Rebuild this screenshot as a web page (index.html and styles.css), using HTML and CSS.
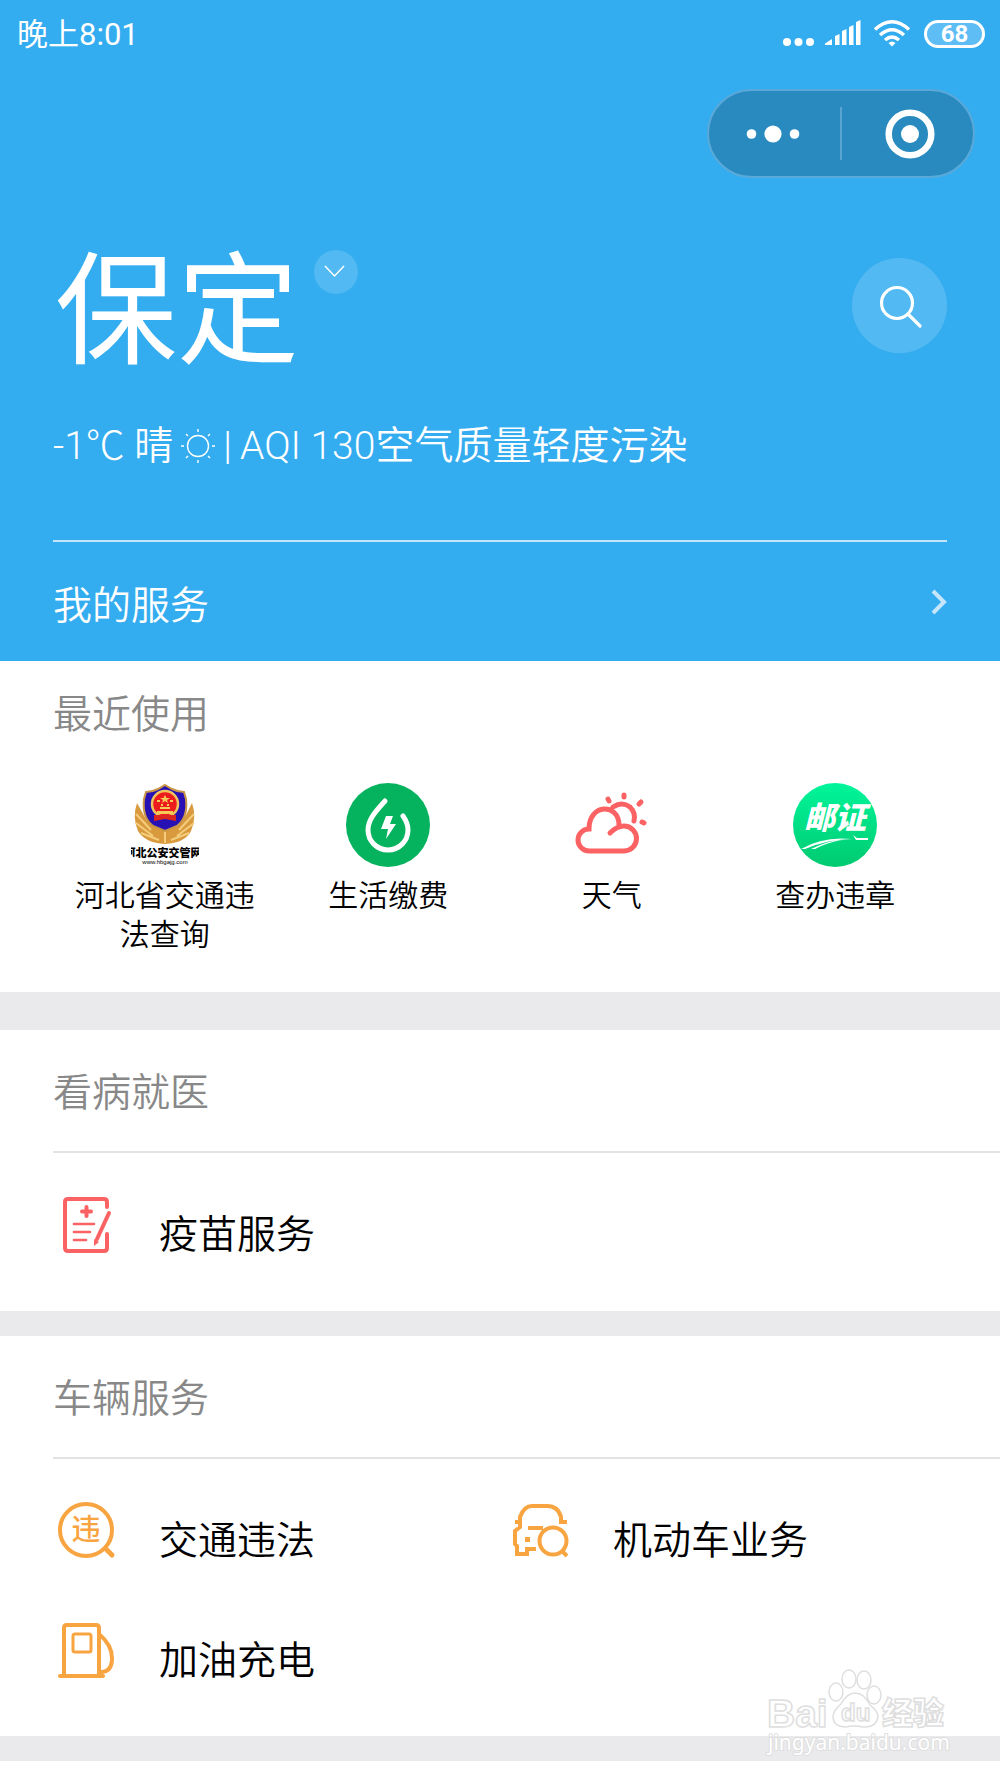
FILE: index.html
```html
<!DOCTYPE html>
<html lang="zh-CN">
<head>
<meta charset="utf-8">
<meta name="viewport" content="width=device-width, initial-scale=1">
<title>城市服务</title>
<link rel="stylesheet" href="styles.css">
</head>
<body>
<header class="hero">
  <div class="status">
    <span>晚上8:01</span>
    <div class="status-icons">
      <svg width="32" height="28" viewBox="0 0 32 28" fill="#fff"><circle cx="5" cy="22" r="4"/><circle cx="16.500" cy="22" r="4"/><circle cx="28" cy="22" r="4"/></svg>
      <svg width="36" height="28" viewBox="0 0 36 28" fill="#fff"><path d="M-1 25V23.500L6 19V25ZM9 25V16L13.500 14V25ZM16 25V11L20.500 9V25ZM23 25V7L27.500 5V25ZM30 25V2L34.500 0V25Z"/></svg>
      <svg width="38" height="28" viewBox="0 0 38 28" fill="none" stroke="#fff" stroke-width="3.500"><path d="M1 9.500Q18-6 35 9.500M6 15Q18 4.500 30 15M11 20Q18 14 25 20"/><path d="M14.500 23Q18 20 21.500 23L18 26.500Z" fill="#fff" stroke="none"/></svg>
      <span class="battery">68</span>
    </div>
  </div>
  <div class="capsule-row">
    <div class="capsule">
      <button class="capsule-btn" aria-label="更多"><svg width="54" height="20" viewBox="0 0 54 20" fill="#fff"><circle cx="5.500" cy="10" r="4.800"/><circle cx="27" cy="10" r="8.600"/><circle cx="48.500" cy="10" r="4.800"/></svg></button>
      <button class="capsule-btn" aria-label="关闭"><svg width="50" height="50" viewBox="0 0 50 50"><circle cx="25" cy="25" r="21.300" fill="none" stroke="#fff" stroke-width="6.500"/><circle cx="25" cy="25" r="9" fill="#fff"/></svg></button>
    </div>
  </div>
  <div class="place">
    <h1 class="city">保定</h1>
    <button class="city-btn" aria-label="切换城市"><svg width="22" height="14" viewBox="0 0 22 14" fill="none" stroke="#fff" stroke-width="1.500"><path d="M0 1L9.500 11L19 1"/></svg></button>
    <button class="search" aria-label="搜索"><svg width="44" height="44" viewBox="0 0 44 44" fill="none" stroke="#fff" stroke-width="3.200" stroke-linecap="round"><circle cx="19" cy="19" r="15.500"/><path d="M30 30L42 42"/></svg></button>
  </div>
  <p class="weather">
    <span>-1℃ <span class="cjk">晴</span></span>
    <svg width="34" height="34" viewBox="0 0 34 34" fill="none" stroke="#fff" stroke-width="1.400"><circle cx="17" cy="17" r="10.500"/><path d="M17 0V3M17 31V34M0 17H3M31 17H34M5 5L7 7M27 27L29 29M5 29L7 27M27 7L29 5"/></svg>
    <span>|</span>
    <span>AQI 130<span class="cjk">空气质量轻度污染</span></span>
  </p>
  <a class="mine" href="#">
    <span>我的服务</span>
    <svg width="16" height="26" viewBox="0 0 16 26" fill="none" stroke="#c5e5fb" stroke-width="4"><path d="M2 2L13 13L2 24"/></svg>
  </a>
</header>
<main>
  <section class="recent">
    <h2 class="title">最近使用</h2>
    <div class="apps">
      <a class="app" href="#">
        <svg width="84" height="84" viewBox="0 0 84 84">
          <defs><clipPath id="round"><path d="M8 60H76V72L60 84H24L8 72Z"/></clipPath></defs>
          <path d="M14 20Q9 34 15 48Q22 60 42 61Q62 60 68 48Q74 34 69 20L60 38H24Z" fill="#d99a3e"/>
          <path d="M13 31L28 47M13 40L30 53M18 50L36 57M71 31L56 47M71 40L54 53M66 50L48 57M42 44V60" stroke="#f3cd7b" stroke-width="2"/>
          <path d="M42 2L49 6Q55 9 61 9L63 16Q65 35 54 43L42 48L30 43Q19 35 21 16L23 9Q29 9 35 6Z" fill="#2711b5" stroke="#c99547" stroke-width="2"/>
          <circle cx="42" cy="21" r="13" fill="#ed1c1c" stroke="#efc45d" stroke-width="2.500"/>
          <path d="M31 32H53V38L42 36L31 38Z" fill="#dc251e"/><path d="M42 12L43.500 15H47L44 17L45 20L42 18L39 20L40 17L37 15H40.500ZM34 28H50V31H34ZM37 24H47V26H37Z" fill="#f5cb58"/>
          <path d="M34 18H37M47 18H50M38 22H40M44 22H46" stroke="#f5cb58" stroke-width="2"/>
          <g clip-path="url(#round)"><text x="40" y="74" text-anchor="middle" class="badge-text">河北公安交管网</text>
          <text x="42" y="81" text-anchor="middle" class="badge-url">www.hbgajg.com</text></g>
        </svg>
        <span class="app-name">河北省交通违法查询</span>
      </a>
      <a class="app" href="#">
        <svg width="84" height="84" viewBox="0 0 84 84"><circle cx="42" cy="42" r="42" fill="#05b35e"/><path d="M39 18C31 27 22 36 22 47A20 20 0 0 0 62 47Q62 40 57 33" fill="none" stroke="#fff" stroke-width="5" stroke-linecap="round"/><path d="M40 33H47L44 41H50L40 56L42 46H35Z" fill="#fff"/></svg>
        <span class="app-name">生活缴费</span>
      </a>
      <a class="app" href="#">
        <svg width="84" height="84" viewBox="-3 0 84 84" fill="none" stroke="#fb6263" stroke-width="5" stroke-linecap="round"><path d="M37 50Q44 43 51 43A12 12 0 0 1 51 68H16A11 11 0 0 1 16 46C16 20 46 20 46 42M40 24Q49 18 57 24Q63 30 61 38M51 12V14M35 16L36 18M66 21L68 19M69 39L71 40"/></svg>
        <span class="app-name">天气</span>
      </a>
      <a class="app" href="#">
        <svg width="84" height="84" viewBox="0 0 84 84"><defs><linearGradient id="g" x2="0" y2="1"><stop stop-color="#00f59a"/><stop offset="1" stop-color="#00ca70"/></linearGradient></defs><circle cx="42" cy="42" r="42" fill="url(#g)"/><text x="42" y="46" text-anchor="middle" class="post-text">邮证</text><path d="M8 66Q30 53 59 56Q36 56 12 66ZM18 66Q36 57 50 57Q35 59 22 66ZM60 52L64 55H75V57H63Z" fill="#fff"/></svg>
        <span class="app-name">查办违章</span>
      </a>
    </div>
  </section>
  <section class="group">
    <h2 class="title">看病就医</h2>
    <div class="services">
      <a class="service" href="#">
        <svg width="60" height="60" viewBox="0 0 60 60" fill="none" stroke="#fb6263" stroke-width="4" stroke-linecap="round"><path d="M54 13V8Q54 5 51 5H15Q12 5 12 8V54Q12 57 15 57H51Q54 57 54 54V40"/><path d="M33.500 13V22M29 17.500H38" stroke-width="4"/><path d="M21 30H41M21 38H37M21 46H33" stroke-width="2.600"/><path d="M56 19L44 45" stroke-width="4"/><path d="M41 45L46 48L41 52Z" fill="#fb6263" stroke="none"/></svg>
        <span>疫苗服务</span>
      </a>
    </div>
  </section>
  <section class="group vehicles">
    <h2 class="title">车辆服务</h2>
    <div class="services">
      <a class="service" href="#">
        <svg width="60" height="60" viewBox="0 0 60 60"><circle cx="33" cy="30" r="26" fill="none" stroke="#f8a441" stroke-width="4"/><path d="M53 49L59 55" stroke="#f8a441" stroke-width="5" stroke-linecap="round"/><text x="33" y="40" text-anchor="middle" class="law-text">违</text></svg>
        <span>交通违法</span>
      </a>
      <a class="service" href="#">
        <svg width="60" height="60" viewBox="-2 0 60 60" fill="none" stroke="#f8a441" stroke-width="4"><path d="M6 22H11V17Q15 6 23 6H38Q49 6 52 17V22H58M11 22V27L6 31V44L8 46V54H18V49H27M19 28H34"/><circle cx="44" cy="41" r="13.500"/><path d="M53 51L58 56"/><path d="M16 37H21V42H16Z" fill="#f8a441" stroke="none"/></svg>
        <span>机动车业务</span>
      </a>
      <a class="service" href="#">
        <svg width="60" height="60" viewBox="0 0 60 60" fill="none" stroke="#f8a441" stroke-width="4" stroke-linecap="round"><path d="M11 56V8Q11 5 14 5H43Q46 5 46 8V56M7 56H50M46 14Q59 25 59 38Q59 52 48 52"/><rect x="20" y="14" width="18" height="18" rx="2" stroke-width="3"/></svg>
        <span>加油充电</span>
      </a>
    </div>
  </section>
</main>
<svg class="watermark" width="184" height="92" viewBox="0 0 184 92" aria-label="Baidu经验">
  <g fill="#fff" stroke="#dedede" stroke-width="1.500"><text x="2" y="60" class="wm-latin">Bai</text><ellipse cx="71" cy="25" rx="7" ry="9"/><ellipse cx="84" cy="12" rx="7" ry="9"/><ellipse cx="99" cy="13" rx="7" ry="9"/><ellipse cx="109" cy="28" rx="7" ry="9"/><path d="M90 26Q99 26 105 38Q113 44 113 50Q111 61 98 60Q89 58 81 60Q68 60 68 49Q69 43 76 37Q82 26 90 26Z"/><text x="76" y="54" class="wm-du">du</text><text x="117" y="57" class="wm-cjk">经验</text><text x="3" y="83" class="wm-url">jingyan.baidu.com</text></g>
</svg>
</body>
</html>
```
FILE: styles.css
```css
* { box-sizing: border-box; }
body {
  position: relative;
  margin: 0;
  background: #fff;
  color: #000;
  font-family: Roboto, "Noto Sans CJK SC", sans-serif;
  font-weight: 350;
}
h1, h2, p { margin: 0; font-weight: 350; }
a { color: inherit; text-decoration: none; }
button { display: flex; align-items: center; justify-content: center; padding: 0; border: 0; color: inherit; }
svg { display: block; flex: none; overflow: visible; }

.hero { padding: 17px 53px 0; background: #34acf0; color: #fff; }
.status { display: flex; justify-content: space-between; margin: 0 -38px 0 -36px; font-size: 31px; line-height: 36px; font-weight: 400; }
.status-icons { display: flex; align-items: center; gap: 12px; height: 34px; }
.battery {
  width: 61px; height: 28px; border: 3px solid #fff; border-radius: 14px;
  background: #5dbdf4; text-align: center; font-size: 24px; line-height: 22px; font-weight: 700;
}
.capsule-row { display: flex; justify-content: flex-end; margin: 36px -28px 0 0; }
.capsule { display: flex; align-items: center; width: 268px; height: 89px; border: 2px solid #5aa9d8; border-radius: 45px; background: #298ac0; }
.capsule-btn { flex: 1; height: 53px; padding-right: 4px; background: none; }
.capsule-btn + .capsule-btn { padding: 0 0 0 4px; border-left: 2px solid #5aa5cf; }

.place { display: flex; align-items: flex-start; height: 216px; padding-top: 61px; }
.city { padding-left: 2px; font-size: 122px; line-height: 148px; font-weight: 400; }
.city-btn { width: 44px; height: 44px; margin: 11px 0 0 15px; border-radius: 50%; background: #53b9f2; }
.search { width: 95px; height: 95px; margin: 19px 0 0 auto; border-radius: 50%; background: #53b9f2; }
.weather { display: flex; align-items: center; gap: 8px; height: 104px; font-size: 39px; line-height: 56px; font-weight: 300; }
.cjk { font-weight: 350; }
.mine {
  display: flex; align-items: center; justify-content: space-between;
  height: 121px; margin-top: 42px; border-top: 2px solid #c2e6fb; font-size: 39px;
}

.title { color: #888; font-size: 39px; line-height: 56px; }
.recent { padding: 26px 53px 38px; }
.apps { display: grid; grid-template-columns: repeat(4, 1fr); margin-top: 40px; }
.app { display: flex; flex-direction: column; align-items: center; gap: 9px; }
.app-name { max-width: 192px; font-size: 30px; line-height: 39px; text-align: center; }
.badge-text { font: 900 11px "Noto Sans CJK SC", sans-serif; }
.badge-url { font: 6px "Liberation Sans", sans-serif; }
.post-text { fill: #fff; font: italic 900 31px "Noto Sans CJK SC", sans-serif; }
.law-text { fill: #f8a441; font: 500 29px "Noto Sans CJK SC", sans-serif; }

.group { padding-left: 53px; border-top: 38px solid #eaeaec; }
.group .title { padding: 35px 0 30px; border-bottom: 2px solid #e2e2e2; }
.services { display: grid; grid-template-columns: repeat(2, 454px); padding: 18px 0 20px; }
.service { display: flex; align-items: center; gap: 46px; height: 120px; font-size: 39px; }
.service svg { margin-bottom: 14px; }
.vehicles { border-top-width: 25px; border-bottom: 25px solid #eaeaec; }
.vehicles .services { padding: 18px 0 19px; }

.watermark { position: absolute; right: 51px; bottom: 2px; }
.wm-latin { font: 700 39px "Liberation Sans", sans-serif; }
.wm-du { font: 700 24px "Liberation Sans", sans-serif; }
.wm-cjk { font: 900 31px "Noto Sans CJK SC", sans-serif; }
.wm-url { font: 21px "Noto Sans", sans-serif; stroke-width: 2px; paint-order: stroke; }
```
